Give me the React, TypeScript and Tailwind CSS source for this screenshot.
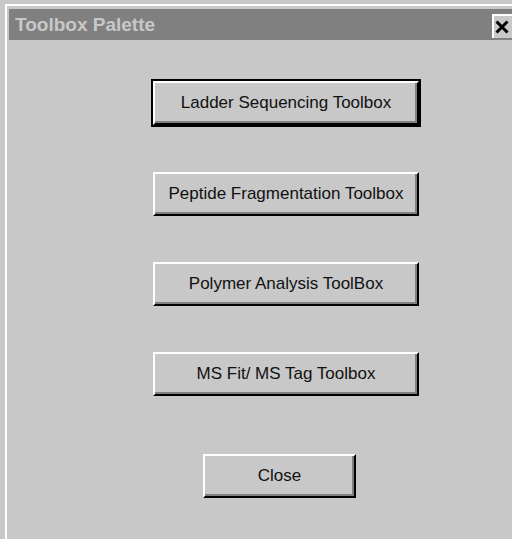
import React from "react";

const font = { fontFamily: '"Liberation Sans", Arial, sans-serif' };

function Btn({ label, className }: { label: string; className: string }) {
  return (
    <div
      className={
        "flex items-center justify-center border-t-2 border-l-2 border-b-2 border-r-2 border-t-white border-l-white border-b-black border-r-black bg-[#c8c8c8] shadow-[inset_-2px_-2px_0_#808080] text-[17px] text-[#111] whitespace-nowrap " +
        className
      }
    >
      <span className="-mt-[1px]">{label}</span>
    </div>
  );
}

export default function App() {
  return (
    <div className="w-[512px] h-[539px] overflow-hidden bg-[#c8c8c8] pl-[5px] pt-[4px]" style={font}>
      <div className="h-[600px] w-[540px] border-l-2 border-t-2 border-white pl-[2px] pt-[3px] flex flex-col">
        <div className="h-[31px] bg-[#808080] flex items-center pl-[6px]">
          <span className="w-[471px] shrink-0 whitespace-nowrap text-[19px] font-bold text-[#c8c8c8] leading-none">
            Toolbox Palette
          </span>
          <div className="ml-[6px] shrink-0 self-end mb-[2px] h-[24px] w-[40px] border-t-2 border-l-2 border-white bg-[#c8c8c8] flex items-center">
            <svg width="14" height="14" viewBox="0 0 14 14" className="ml-[1px]">
              <path d="M1.5 1.5 L12.5 12.5 M12.5 1.5 L1.5 12.5" stroke="#000" strokeWidth="3" strokeLinecap="butt" />
            </svg>
          </div>
        </div>
        <div className="flex flex-col items-start">
          <div className="mt-[39px] ml-[142px] border-2 border-black">
            <Btn label="Ladder Sequencing Toolbox" className="w-[266px] h-[44px]" />
          </div>
          <Btn label="Peptide Fragmentation Toolbox" className="mt-[45px] ml-[144px] w-[266px] h-[44px]" />
          <Btn label="Polymer Analysis ToolBox" className="mt-[46px] ml-[144px] w-[266px] h-[44px]" />
          <Btn label="MS Fit/ MS Tag Toolbox" className="mt-[46px] ml-[144px] w-[266px] h-[44px]" />
          <Btn label="Close" className="mt-[58px] ml-[194px] w-[153px] h-[44px]" />
        </div>
      </div>
    </div>
  );
}
